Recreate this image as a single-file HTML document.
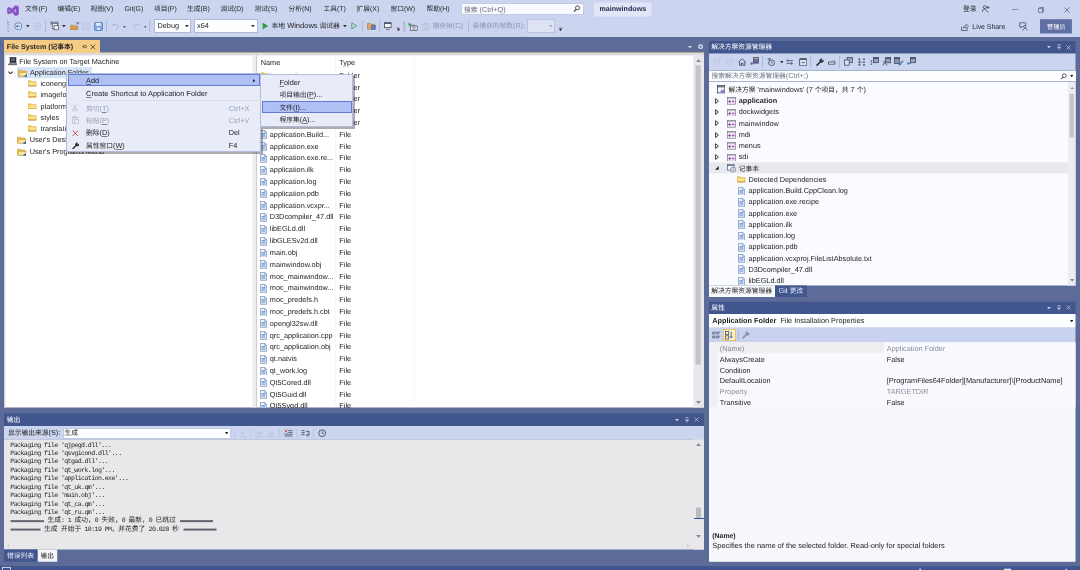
<!DOCTYPE html>
<html><head><meta charset="utf-8"><title>mainwindows - Visual Studio</title><style>
html,body{margin:0;padding:0}
body{width:1080px;height:570px;overflow:hidden;position:relative;background:#5D6B99;font-family:"Liberation Sans","Noto Sans CJK SC",sans-serif;font-size:7.3px;color:#1e1e1e;text-rendering:geometricPrecision;-webkit-font-smoothing:antialiased}
#root{position:absolute;left:0;top:0;width:1080px;height:570px;overflow:hidden;will-change:transform}
.a{position:absolute;display:block}
.t{position:absolute;white-space:nowrap;line-height:10px;height:10px}
i{font-style:normal;font-size:6.75px;display:inline-block;position:relative;width:6.75px;text-align:center;white-space:nowrap}
.m{font-family:"Liberation Mono","Noto Sans CJK SC",monospace;font-size:6.6px;letter-spacing:-0.585px;color:#1e1e1e}
.m i{letter-spacing:0}
u{text-decoration-thickness:0.4px;text-underline-offset:0.7px;text-decoration-color:rgba(40,40,50,0.55)}
</style></head><body><div id="root">
<div class="a " style="left:0px;top:0px;width:1080px;height:37px;background:#CCD5F0;"></div>
<svg class="a" style="left:6.5px;top:4.5px;" width="12" height="11.2" viewBox="0 0 12 11.2"><path d="M8.6 0.3L11.7 1.8V9.4L8.6 10.9L5.8 8.2V7L1.7 9.2L0.2 7.7V3.5L1.7 2L5.8 4.2V3z" fill="#8A53C6" stroke="#8A53C6" stroke-width="0.4" stroke-linejoin="round"/><path d="M8.8 3.7V7.5L7.2 5.6z" fill="#D9C8F0"/><path d="M1.9 4.6V6.6L3.1 5.6z" fill="#D9C8F0"/></svg>
<div class="t " style="left:25px;top:5px;font-size:6.9px;color:#262626;"><i>文</i><i>件</i>(F)</div>
<div class="t " style="left:57.5px;top:5px;font-size:6.9px;color:#262626;"><i>编</i><i>辑</i>(E)</div>
<div class="t " style="left:90.5px;top:5px;font-size:6.9px;color:#262626;"><i>视</i><i>图</i>(V)</div>
<div class="t " style="left:124.5px;top:5px;font-size:6.9px;color:#262626;">Git(G)</div>
<div class="t " style="left:154px;top:5px;font-size:6.9px;color:#262626;"><i>项</i><i>目</i>(P)</div>
<div class="t " style="left:187px;top:5px;font-size:6.9px;color:#262626;"><i>生</i><i>成</i>(B)</div>
<div class="t " style="left:220.5px;top:5px;font-size:6.9px;color:#262626;"><i>调</i><i>试</i>(D)</div>
<div class="t " style="left:254.5px;top:5px;font-size:6.9px;color:#262626;"><i>测</i><i>试</i>(S)</div>
<div class="t " style="left:288.5px;top:5px;font-size:6.9px;color:#262626;"><i>分</i><i>析</i>(N)</div>
<div class="t " style="left:323.5px;top:5px;font-size:6.9px;color:#262626;"><i>工</i><i>具</i>(T)</div>
<div class="t " style="left:356.5px;top:5px;font-size:6.9px;color:#262626;"><i>扩</i><i>展</i>(X)</div>
<div class="t " style="left:390.5px;top:5px;font-size:6.9px;color:#262626;"><i>窗</i><i>口</i>(W)</div>
<div class="t " style="left:426.5px;top:5px;font-size:6.9px;color:#262626;"><i>帮</i><i>助</i>(H)</div>
<div class="a " style="left:460.7px;top:3.1px;width:123.8px;height:12.1px;background:#F9FAFF;border:0.6px solid #C3CBE4;box-sizing:border-box;"></div>
<div class="t " style="left:464px;top:4.6px;color:#6a6f80;"><i>搜</i><i>索</i> (Ctrl+Q)</div>
<svg class="a" style="left:573.3px;top:5.4px;" width="7.4" height="7.4" viewBox="0 0 7 7"><circle cx="4.3" cy="2.7" r="1.9" fill="none" stroke="#333" stroke-width="0.8"/><path d="M3 4.1L0.8 6.3" stroke="#333" stroke-width="1"/></svg>
<svg class="a" style="left:594px;top:2px" width="58" height="15"><rect x="0.00" y="0.40" width="57.30" height="14.20" fill="#E0E6F7"/></svg>
<div class="t " style="left:599.4px;top:4.4px;font-weight:bold;color:#262d4d;font-size:7.15px;">mainwindows</div>
<div class="t " style="left:963px;top:3.7px;"><i>登</i><i>录</i></div>
<svg class="a" style="left:981.8px;top:5.2px;" width="8" height="8" viewBox="0 0 8 8"><circle cx="2.8" cy="2.2" r="1.5" fill="none" stroke="#333" stroke-width="0.7"/><path d="M0.5 7V5.8Q0.5 4.2 2.8 4.2L6.5 7.5M4.5 2.5h3M6 1v3" fill="none" stroke="#333" stroke-width="0.7"/></svg>
<svg class="a" style="left:1012px;top:9px" width="7" height="1"><rect x="0.30" y="0.10" width="5.80" height="0.60" fill="#555b70"/></svg>
<svg class="a" style="left:1038px;top:6.6px;" width="6.2" height="6.2" viewBox="0 0 7 7"><path d="M0.5 1.8h4.6v4.6H0.5z M1.8 1.8V0.6h4.6v4.6H5.1" fill="none" stroke="#555b70" stroke-width="0.8"/></svg>
<svg class="a" style="left:1064.2px;top:7px;" width="6.2" height="6.2" viewBox="0 0 6.2 6.2"><path d="M0.4 0.4l5.2 5.2M5.6 0.4L0.4 5.6" stroke="#555b70" stroke-width="0.7"/></svg>
<svg class="a" style="left:960.5px;top:23px;" width="8" height="8" viewBox="0 0 8 8"><path d="M0.6 3.5v4h5.6V5.2" fill="none" stroke="#3a3f55" stroke-width="0.7"/><path d="M2.2 5.5Q2.6 2.6 5.3 2.4V1l2.2 2.2L5.3 5.3V4Q3.4 4 2.2 5.5z" fill="none" stroke="#3a3f55" stroke-width="0.6"/></svg>
<div class="t " style="left:972.3px;top:22.8px;font-size:6.9px;">Live Share</div>
<svg class="a" style="left:1018.5px;top:21.5px;" width="9" height="9" viewBox="0 0 9 9"><path d="M0.6 0.8h6v3.6H3.6L2 6V4.4H0.6z" fill="none" stroke="#3a3f55" stroke-width="0.7"/><circle cx="6" cy="4.6" r="1.2" fill="#CCD5F0" stroke="#3a3f55" stroke-width="0.6"/><path d="M3.8 8.6Q4 6.3 6 6.3Q8 6.3 8.2 8.6" fill="none" stroke="#3a3f55" stroke-width="0.6"/></svg>
<svg class="a" style="left:1040px;top:19px" width="32" height="15"><rect x="0.00" y="0.20" width="31.90" height="14.30" fill="#5F6FA3"/></svg>
<div class="t " style="left:1046.8px;top:22.2px;color:#fff;transform:scale(0.91);transform-origin:0 50%;"><i>管</i><i>理</i><i>员</i></div>
<svg class="a" style="left:7px;top:20.5px;" width="2.6" height="11.5" viewBox="0 0 2.6 11.5"><rect x="0.1" y="0.00" width="1" height="0.8" fill="#8089ad"/><rect x="1.3" y="1.12" width="1" height="0.8" fill="#8089ad"/><rect x="0.1" y="2.24" width="1" height="0.8" fill="#8089ad"/><rect x="1.3" y="3.36" width="1" height="0.8" fill="#8089ad"/><rect x="0.1" y="4.48" width="1" height="0.8" fill="#8089ad"/><rect x="1.3" y="5.60" width="1" height="0.8" fill="#8089ad"/><rect x="0.1" y="6.72" width="1" height="0.8" fill="#8089ad"/><rect x="1.3" y="7.84" width="1" height="0.8" fill="#8089ad"/><rect x="0.1" y="8.96" width="1" height="0.8" fill="#8089ad"/><rect x="1.3" y="10.08" width="1" height="0.8" fill="#8089ad"/></svg>
<svg class="a" style="left:13.5px;top:21.8px;" width="8.4" height="8.4" viewBox="0 0 8.4 8.4"><circle cx="4.2" cy="4.2" r="3.5" fill="#EEF3FC" stroke="#3B6CB8" stroke-width="0.8"/><path d="M6.3 4.2H2.4M3.9 2.6L2.3 4.2L3.9 5.8" fill="none" stroke="#2D5CA8" stroke-width="0.9"/></svg>
<svg class="a" style="left:25.6px;top:25.3px;" width="3.8" height="2.3" viewBox="0 0 3.8 2.3"><path d="M0 0h3.8L1.9 2.2z" fill="#2b2b2b"/></svg>
<svg class="a" style="left:33px;top:21.8px;" width="8.4" height="8.4" viewBox="0 0 8.4 8.4"><circle cx="4.2" cy="4.2" r="3.5" fill="none" stroke="#B3BBD6" stroke-width="0.7"/><path d="M2.2 4.2H6M4.6 2.8L6 4.2L4.6 5.6" fill="none" stroke="#B3BBD6" stroke-width="0.7"/></svg>
<svg class="a" style="left:45px;top:20px" width="1" height="12"><rect x="0.30" y="0.50" width="0.60" height="11.50" fill="#9AA5C6"/></svg>
<svg class="a" style="left:49.5px;top:21.3px;" width="9.5" height="9.5" viewBox="0 0 9.5 9.5"><path d="M1 1.2h7M1 1.2v2.6M8 1.2v2.6" stroke="#4a4f5e" stroke-width="0.7" fill="none"/><rect x="2.3" y="2.6" width="5" height="5" fill="#F6F6FA" stroke="#4a4f5e" stroke-width="0.7"/><rect x="4" y="4.6" width="4.4" height="4.2" fill="#E9ECF5" stroke="#4a4f5e" stroke-width="0.7"/><path d="M0.6 0.6l1.2 1.2M1.8 0.6L0.6 1.8" stroke="#4a4f5e" stroke-width="0.5"/></svg>
<svg class="a" style="left:62.1px;top:25.3px;" width="3.8" height="2.3" viewBox="0 0 3.8 2.3"><path d="M0 0h3.8L1.9 2.2z" fill="#2b2b2b"/></svg>
<svg class="a" style="left:69.5px;top:21.6px;" width="9.4" height="8.6" viewBox="0 0 9.4 8.6"><path d="M0.5 3.2h2.6l0.8 0.9h3.9v3.9H0.5z" fill="#D9A050" stroke="#A87228" stroke-width="0.5"/><path d="M5.8 2.6L8.2 0.8M8.4 0.4v1.9M6.8 0.5h1.7" stroke="#3B6CB8" stroke-width="0.75" fill="none"/></svg>
<svg class="a" style="left:82.3px;top:22px;" width="7.4" height="7.8" viewBox="0 0 7.4 7.8"><path d="M0.5 0.5h5.2l1.2 1.2v5.6H0.5z" fill="none" stroke="#B9C1DA" stroke-width="0.7"/><path d="M1.8 0.5v2.2h3.2V0.5M1.6 7.2V4.6h4.2v2.6" fill="none" stroke="#B9C1DA" stroke-width="0.6"/></svg>
<svg class="a" style="left:93.7px;top:21.5px;" width="9" height="9" viewBox="0 0 9 9"><rect x="0.5" y="0.5" width="8" height="8" rx="0.8" fill="#86AEE3" stroke="#3F72B8" stroke-width="0.7"/><rect x="2.2" y="0.9" width="4.6" height="2.8" fill="#E4EEFB"/><path d="M2.3 8V5.5Q4.5 4.3 6.7 5.5V8" fill="#D5E4F8" stroke="#3F72B8" stroke-width="0.5"/></svg>
<svg class="a" style="left:106px;top:20px" width="1" height="12"><rect x="0.30" y="0.50" width="0.60" height="11.50" fill="#9AA5C6"/></svg>
<svg class="a" style="left:111.5px;top:22px;" width="7" height="8" viewBox="0 0 7 8"><path d="M1 2.6h3.2Q6.3 2.8 6.2 4.8Q6 6.6 3.6 7.3" fill="none" stroke="#A9B3D3" stroke-width="0.9"/><path d="M2.6 0.8L0.8 2.6L2.6 4.4" fill="none" stroke="#A9B3D3" stroke-width="0.9"/></svg>
<svg class="a" style="left:123px;top:25.5px;" width="2.8" height="2.3" viewBox="0 0 2.8 2.3"><path d="M0 0h2.8L1.4 2.2z" fill="#5a6078"/></svg>
<svg class="a" style="left:132.5px;top:22px;" width="7" height="8" viewBox="0 0 7 8"><path d="M6 2.6H2.8Q0.7 2.8 0.8 4.8Q1 6.6 3.4 7.3" fill="none" stroke="#B4BCD8" stroke-width="0.9"/><path d="M4.4 0.8L6.2 2.6L4.4 4.4" fill="none" stroke="#B4BCD8" stroke-width="0.9"/></svg>
<svg class="a" style="left:143.5px;top:25.5px;" width="2.8" height="2.3" viewBox="0 0 2.8 2.3"><path d="M0 0h2.8L1.4 2.2z" fill="#5a6078"/></svg>
<svg class="a" style="left:149px;top:20px" width="2" height="12"><rect x="0.50" y="0.50" width="0.60" height="11.50" fill="#9AA5C6"/></svg>
<div class="a " style="left:154.3px;top:19.4px;width:37.2px;height:13.2px;background:#FDFEFF;border:0.7px solid #AEB9D8;box-sizing:border-box;border-radius:0.6px;"></div>
<div class="t " style="left:157.5px;top:21.3px;">Debug</div>
<svg class="a" style="left:185.3px;top:25.4px;" width="3.8" height="2.3" viewBox="0 0 3.8 2.3"><path d="M0 0h3.8L1.9 2.2z" fill="#2b2b2b"/></svg>
<div class="a " style="left:194px;top:19.4px;width:63.5px;height:13.2px;background:#FDFEFF;border:0.7px solid #AEB9D8;box-sizing:border-box;border-radius:0.6px;"></div>
<div class="t " style="left:197px;top:21.3px;">x64</div>
<svg class="a" style="left:250.9px;top:25.4px;" width="3.8" height="2.3" viewBox="0 0 3.8 2.3"><path d="M0 0h3.8L1.9 2.2z" fill="#2b2b2b"/></svg>
<svg class="a" style="left:261.5px;top:22.4px;" width="7" height="8" viewBox="0 0 7 8"><path d="M0.6 0.5L6.2 4L0.6 7.5z" fill="#2E9E3E"/></svg>
<div class="t " style="left:271.6px;top:21.1px;"><i>本</i><i>地</i> <span style="font-size:7.5px;position:relative;top:0.3px">Windows</span> <i>调</i><i>试</i><i>器</i></div>
<svg class="a" style="left:343px;top:25.4px;" width="3.8" height="2.3" viewBox="0 0 3.8 2.3"><path d="M0 0h3.8L1.9 2.2z" fill="#2b2b2b"/></svg>
<svg class="a" style="left:350.8px;top:22.4px;" width="7" height="7.6" viewBox="0 0 7 7.6"><path d="M0.8 0.8L5.8 3.8L0.8 6.8z" fill="none" stroke="#3DA04B" stroke-width="0.8"/></svg>
<svg class="a" style="left:362px;top:20px" width="1" height="12"><rect x="0.30" y="0.50" width="0.60" height="11.50" fill="#9AA5C6"/></svg>
<svg class="a" style="left:367px;top:22px;" width="9" height="8.5" viewBox="0 0 9 8.5"><path d="M0.5 1.5h3l0.7 0.8h3.6v5H0.5z" fill="#D9A85E" stroke="#8B6A34" stroke-width="0.5"/><rect x="4.6" y="3.4" width="3.8" height="4" fill="#5C7FC2" stroke="#34508A" stroke-width="0.4"/></svg>
<svg class="a" style="left:379px;top:20px" width="2" height="12"><rect x="0.50" y="0.50" width="0.60" height="11.50" fill="#9AA5C6"/></svg>
<svg class="a" style="left:384px;top:22.3px;" width="8" height="8" viewBox="0 0 8 8"><rect x="0.5" y="0.6" width="6.6" height="5" fill="#F2F4FA" stroke="#444A5C" stroke-width="0.8"/><path d="M0.5 1.4h6.6" stroke="#444A5C" stroke-width="1"/><path d="M2.2 7.3h3.4" stroke="#444A5C" stroke-width="0.8"/></svg>
<svg class="a" style="left:396px;top:27px" width="4" height="2"><rect x="0.70" y="0.70" width="3.00" height="0.70" fill="#2b2b2b"/></svg>
<svg class="a" style="left:396.5px;top:29.1px;" width="3" height="2.3" viewBox="0 0 3 2.3"><path d="M0 0h3.0L1.5 2.2z" fill="#2b2b2b"/></svg>
<svg class="a" style="left:403px;top:20.5px;" width="2.6" height="11.5" viewBox="0 0 2.6 11.5"><rect x="0.1" y="0.00" width="1" height="0.8" fill="#8089ad"/><rect x="1.3" y="1.12" width="1" height="0.8" fill="#8089ad"/><rect x="0.1" y="2.24" width="1" height="0.8" fill="#8089ad"/><rect x="1.3" y="3.36" width="1" height="0.8" fill="#8089ad"/><rect x="0.1" y="4.48" width="1" height="0.8" fill="#8089ad"/><rect x="1.3" y="5.60" width="1" height="0.8" fill="#8089ad"/><rect x="0.1" y="6.72" width="1" height="0.8" fill="#8089ad"/><rect x="1.3" y="7.84" width="1" height="0.8" fill="#8089ad"/><rect x="0.1" y="8.96" width="1" height="0.8" fill="#8089ad"/><rect x="1.3" y="10.08" width="1" height="0.8" fill="#8089ad"/></svg>
<svg class="a" style="left:408px;top:21.8px;" width="10" height="9" viewBox="0 0 10 9"><path d="M0.6 0.6L3.8 2.6L0.6 4.6z" fill="#2E9E3E"/><rect x="2.6" y="4" width="6.6" height="4.4" fill="#F0F2F8" stroke="#444A5C" stroke-width="0.7"/><circle cx="5.9" cy="6.2" r="1.3" fill="none" stroke="#444A5C" stroke-width="0.6"/><path d="M4.4 4V3.2h2.4V4" stroke="#444A5C" stroke-width="0.6" fill="none"/></svg>
<svg class="a" style="left:422px;top:22.5px;" width="8" height="8" viewBox="0 0 8 8"><rect x="0.6" y="1.6" width="5" height="5.4" fill="none" stroke="#B4BCD8" stroke-width="0.7"/><rect x="2.2" y="0.6" width="5" height="5" fill="none" stroke="#B4BCD8" stroke-width="0.6"/></svg>
<div class="t " style="left:432.5px;top:21.2px;color:#8e96b3;"><i>捕</i><i>获</i><i>帧</i>(C)</div>
<svg class="a" style="left:468px;top:20px" width="1" height="12"><rect x="0.00" y="0.50" width="0.60" height="11.50" fill="#9AA5C6"/></svg>
<div class="t " style="left:472.5px;top:21.2px;color:#8e96b3;"><i>要</i><i>捕</i><i>获</i><i>的</i><i>帧</i><i>数</i>(R):</div>
<div class="a " style="left:527.3px;top:19.4px;width:27.5px;height:13.2px;background:#DDE3F4;border:0.7px solid #BCC5DF;box-sizing:border-box;"></div>
<svg class="a" style="left:548.6px;top:25.4px;" width="3.4" height="2.3" viewBox="0 0 3.4 2.3"><path d="M0 0h3.4000000000000004L1.7000000000000002 2.2z" fill="#9aa3c0"/></svg>
<svg class="a" style="left:559px;top:27px" width="4" height="2"><rect x="0.30" y="0.70" width="3.00" height="0.70" fill="#2b2b2b"/></svg>
<svg class="a" style="left:559.1px;top:29.1px;" width="3" height="2.3" viewBox="0 0 3 2.3"><path d="M0 0h3.0L1.5 2.2z" fill="#2b2b2b"/></svg>
<div class="a " style="left:4px;top:40px;width:96px;height:13px;background:#F5CC84;"></div>
<div class="t bd" style="left:6.8px;top:41.7px;font-weight:bold;color:#1e1e1e;font-size:7.1px;">File System (<i>记</i><i>事</i><i>本</i>)</div>
<svg class="a" style="left:81.5px;top:44.3px;" width="5" height="5" viewBox="0 0 5 5"><path d="M0.2 2.5h1.6M1.8 0.9v3.2M1.8 1.4h2.6v2.2H1.8" fill="none" stroke="#4a4030" stroke-width="0.6"/></svg>
<svg class="a" style="left:89.8px;top:43.8px;" width="6" height="6" viewBox="0 0 6 6"><path d="M0.6 0.6l4.6 4.6M5.2 0.6L0.6 5.2" stroke="#3a3326" stroke-width="0.8"/></svg>
<div class="a " style="left:100px;top:52px;width:604px;height:1px;background:#B7A98F;"></div>
<div class="a " style="left:4px;top:53px;width:700px;height:2px;background:#DADADF;"></div>
<svg class="a" style="left:688.3px;top:45.8px;" width="4" height="2.4" viewBox="0 0 4 2.4"><path d="M0 0h4L2 2.2z" fill="#D9DFF1"/></svg>
<svg class="a" style="left:698px;top:44px;" width="5.4" height="5.4" viewBox="0 0 6 6"><circle cx="3" cy="3" r="1.9" fill="none" stroke="#D9DFF1" stroke-width="1.4"/><circle cx="3" cy="3" r="2.7" fill="none" stroke="#D9DFF1" stroke-width="0.8" stroke-dasharray="1 1.1"/></svg>
<svg class="a" style="left:4px;top:55px" width="700" height="353"><rect x="0.00" y="0.00" width="700.00" height="352.50" fill="#fff"/></svg>
<div class="a " style="left:4px;top:55px;width:700px;height:1px;background:#F0F0F3;"></div>
<svg class="a" style="left:4px;top:53px" width="2" height="355"><rect x="0.00" y="0.00" width="1.40" height="354.50" fill="#D5D6DC"/></svg>
<svg class="a" style="left:252px;top:54px" width="5" height="354"><rect x="0.60" y="0.80" width="4.10" height="352.70" fill="#EDEDEF"/></svg>
<svg class="a" style="left:256px;top:54px" width="2" height="354"><rect x="0.50" y="0.80" width="0.60" height="352.70" fill="#A9ABB3"/></svg>
<svg class="a" style="left:693px;top:54px" width="11" height="354"><rect x="0.30" y="0.80" width="10.70" height="352.70" fill="#E8E8EC"/></svg>
<svg class="a" style="left:696px;top:58.5px;" width="5" height="3" viewBox="0 0 5 3"><path d="M0 3h5L2.5 0z" fill="#868999"/></svg>
<svg class="a" style="left:696px;top:401px;" width="5" height="3" viewBox="0 0 5 3"><path d="M0 0h5L2.5 3z" fill="#868999"/></svg>
<svg class="a" style="left:695px;top:65px" width="6" height="300"><rect x="0.60" y="0.50" width="5.20" height="299.20" fill="#C2C3C9"/></svg>
<svg class="a" style="left:7.5px;top:57.3px;" width="9" height="8.4" viewBox="0 0 9 8.4"><rect x="2" y="0.4" width="6" height="4.8" fill="#2b2e36" stroke="#1c1e24" stroke-width="0.5"/><rect x="2.9" y="1.2" width="4.2" height="3" fill="#59647c"/><path d="M0.4 7.7l1.6-2.2h6l0.8 2.2z" fill="#8b8f99" stroke="#2b2e36" stroke-width="0.6"/></svg>
<div class="t " style="left:19.3px;top:56.5px;">File System on Target Machine</div>
<svg class="a" style="left:17px;top:67px" width="75" height="12"><rect x="0.00" y="0.15" width="75.00" height="11.20" fill="#D5E3F7"/></svg>
<svg class="a" style="left:8.3px;top:70.75px;" width="5.2" height="3.6" viewBox="0 0 5.2 3.6"><path d="M0.5 0.6l2.1 2.2l2.1-2.2" fill="none" stroke="#2e2e2e" stroke-width="1.05"/></svg>
<svg class="a" style="left:17.8px;top:68.75px;" width="9.6" height="8.2" viewBox="0 0 9.6 8.2"><path d="M0.4 1.2h2.9l0.8 0.9h4v5H0.4z" fill="#EFC450" stroke="#B8902C" stroke-width="0.55"/><path d="M1.7 3.4h7.5l-1.5 3.8H0.4z" fill="#FBE59A" stroke="#B8902C" stroke-width="0.5"/><path d="M5.6 7.6l3.4-2.6v3.2z" fill="#3D6DB5"/></svg>
<div class="t " style="left:30px;top:67.75px;">Application Folder</div>
<svg class="a" style="left:28.4px;top:80.2px;" width="8.6" height="6.6" viewBox="0 0 8.8 7"><path d="M0.3 0.9h2.9l0.8 0.9h4.4v4.7H0.3z" fill="#F5CE55" stroke="#C99A2C" stroke-width="0.55"/><path d="M0.7 2.5h7.3v3.1H0.7z" fill="#FBE38C"/><path d="M0.3 6.4h8.1" stroke="#A97F22" stroke-width="0.6"/></svg>
<div class="t " style="left:40.5px;top:79px;">iconengines</div>
<svg class="a" style="left:28.4px;top:91.45px;" width="8.6" height="6.6" viewBox="0 0 8.8 7"><path d="M0.3 0.9h2.9l0.8 0.9h4.4v4.7H0.3z" fill="#F5CE55" stroke="#C99A2C" stroke-width="0.55"/><path d="M0.7 2.5h7.3v3.1H0.7z" fill="#FBE38C"/><path d="M0.3 6.4h8.1" stroke="#A97F22" stroke-width="0.6"/></svg>
<div class="t " style="left:40.5px;top:90.25px;">imageformats</div>
<svg class="a" style="left:28.4px;top:102.7px;" width="8.6" height="6.6" viewBox="0 0 8.8 7"><path d="M0.3 0.9h2.9l0.8 0.9h4.4v4.7H0.3z" fill="#F5CE55" stroke="#C99A2C" stroke-width="0.55"/><path d="M0.7 2.5h7.3v3.1H0.7z" fill="#FBE38C"/><path d="M0.3 6.4h8.1" stroke="#A97F22" stroke-width="0.6"/></svg>
<div class="t " style="left:40.5px;top:101.5px;">platforms</div>
<svg class="a" style="left:28.4px;top:113.95px;" width="8.6" height="6.6" viewBox="0 0 8.8 7"><path d="M0.3 0.9h2.9l0.8 0.9h4.4v4.7H0.3z" fill="#F5CE55" stroke="#C99A2C" stroke-width="0.55"/><path d="M0.7 2.5h7.3v3.1H0.7z" fill="#FBE38C"/><path d="M0.3 6.4h8.1" stroke="#A97F22" stroke-width="0.6"/></svg>
<div class="t " style="left:40.5px;top:112.75px;">styles</div>
<svg class="a" style="left:28.4px;top:125.2px;" width="8.6" height="6.6" viewBox="0 0 8.8 7"><path d="M0.3 0.9h2.9l0.8 0.9h4.4v4.7H0.3z" fill="#F5CE55" stroke="#C99A2C" stroke-width="0.55"/><path d="M0.7 2.5h7.3v3.1H0.7z" fill="#FBE38C"/><path d="M0.3 6.4h8.1" stroke="#A97F22" stroke-width="0.6"/></svg>
<div class="t " style="left:40.5px;top:124px;">translations</div>
<svg class="a" style="left:17.2px;top:136.25px;" width="9.6" height="8.2" viewBox="0 0 9.6 8.2"><path d="M0.4 1.2h2.9l0.8 0.9h4v5H0.4z" fill="#EFC450" stroke="#B8902C" stroke-width="0.55"/><path d="M1.7 3.4h7.5l-1.5 3.8H0.4z" fill="#FBE59A" stroke="#B8902C" stroke-width="0.5"/><path d="M5.6 7.6l3.4-2.6v3.2z" fill="#3D6DB5"/></svg>
<div class="t " style="left:29.7px;top:135.25px;">User's Desktop</div>
<svg class="a" style="left:17.2px;top:147.5px;" width="9.6" height="8.2" viewBox="0 0 9.6 8.2"><path d="M0.4 1.2h2.9l0.8 0.9h4v5H0.4z" fill="#EFC450" stroke="#B8902C" stroke-width="0.55"/><path d="M1.7 3.4h7.5l-1.5 3.8H0.4z" fill="#FBE59A" stroke="#B8902C" stroke-width="0.5"/><path d="M5.6 7.6l3.4-2.6v3.2z" fill="#3D6DB5"/></svg>
<div class="t " style="left:29.7px;top:146.5px;">User's Programs Menu</div>
<div class="t " style="left:260.8px;top:57.8px;">Name</div>
<div class="t " style="left:339.3px;top:57.8px;">Type</div>
<svg class="a" style="left:335px;top:56px" width="1" height="352"><rect x="0.30" y="0.00" width="0.70" height="351.50" fill="#F4F4F6"/></svg>
<svg class="a" style="left:413px;top:56px" width="2" height="352"><rect x="0.90" y="0.00" width="0.70" height="351.50" fill="#F4F4F6"/></svg>
<svg class="a" style="left:260.8px;top:72px;" width="8.6" height="6.6" viewBox="0 0 8.8 7"><path d="M0.3 0.9h2.9l0.8 0.9h4.4v4.7H0.3z" fill="#F5CE55" stroke="#C99A2C" stroke-width="0.55"/><path d="M0.7 2.5h7.3v3.1H0.7z" fill="#FBE38C"/><path d="M0.3 6.4h8.1" stroke="#A97F22" stroke-width="0.6"/></svg>
<div class="t " style="left:269.8px;top:70.8px;">iconengines</div>
<div class="t " style="left:339.3px;top:70.8px;">Folder</div>
<svg class="a" style="left:260.8px;top:83.8125px;" width="8.6" height="6.6" viewBox="0 0 8.8 7"><path d="M0.3 0.9h2.9l0.8 0.9h4.4v4.7H0.3z" fill="#F5CE55" stroke="#C99A2C" stroke-width="0.55"/><path d="M0.7 2.5h7.3v3.1H0.7z" fill="#FBE38C"/><path d="M0.3 6.4h8.1" stroke="#A97F22" stroke-width="0.6"/></svg>
<div class="t " style="left:269.8px;top:82.6125px;">imageformats</div>
<div class="t " style="left:339.3px;top:82.6125px;">Folder</div>
<svg class="a" style="left:260.8px;top:95.625px;" width="8.6" height="6.6" viewBox="0 0 8.8 7"><path d="M0.3 0.9h2.9l0.8 0.9h4.4v4.7H0.3z" fill="#F5CE55" stroke="#C99A2C" stroke-width="0.55"/><path d="M0.7 2.5h7.3v3.1H0.7z" fill="#FBE38C"/><path d="M0.3 6.4h8.1" stroke="#A97F22" stroke-width="0.6"/></svg>
<div class="t " style="left:269.8px;top:94.425px;">platforms</div>
<div class="t " style="left:339.3px;top:94.425px;">Folder</div>
<svg class="a" style="left:260.8px;top:107.438px;" width="8.6" height="6.6" viewBox="0 0 8.8 7"><path d="M0.3 0.9h2.9l0.8 0.9h4.4v4.7H0.3z" fill="#F5CE55" stroke="#C99A2C" stroke-width="0.55"/><path d="M0.7 2.5h7.3v3.1H0.7z" fill="#FBE38C"/><path d="M0.3 6.4h8.1" stroke="#A97F22" stroke-width="0.6"/></svg>
<div class="t " style="left:269.8px;top:106.237px;">styles</div>
<div class="t " style="left:339.3px;top:106.237px;">Folder</div>
<svg class="a" style="left:260.8px;top:119.25px;" width="8.6" height="6.6" viewBox="0 0 8.8 7"><path d="M0.3 0.9h2.9l0.8 0.9h4.4v4.7H0.3z" fill="#F5CE55" stroke="#C99A2C" stroke-width="0.55"/><path d="M0.7 2.5h7.3v3.1H0.7z" fill="#FBE38C"/><path d="M0.3 6.4h8.1" stroke="#A97F22" stroke-width="0.6"/></svg>
<div class="t " style="left:269.8px;top:118.05px;">translations</div>
<div class="t " style="left:339.3px;top:118.05px;">Folder</div>
<div class="a" style="left:257px;top:55px;width:436px;height:352.5px;overflow:hidden">
<svg class="a" style="left:3.3px;top:75.4px" width="7.2" height="8.8" viewBox="0 0 7.2 8.8"><path d="M0.4 0.4h4.3l2 2v5.9H0.4z" fill="#EAF1FC" stroke="#5878A8" stroke-width="0.65"/><path d="M4.7 0.4v2h2" fill="#C9DAF2" stroke="#5878A8" stroke-width="0.5"/><path d="M1.5 3.6h3.9M1.5 4.9h3.9M1.5 6.2h3.9" stroke="#4F80C8" stroke-width="0.75"/></svg>
<div class="t" style="left:12.8px;top:74.8px">application.Build...</div>
<div class="t" style="left:82.3px;top:74.8px">File</div>
<svg class="a" style="left:3.3px;top:87.2125px" width="7.2" height="8.8" viewBox="0 0 7.2 8.8"><path d="M0.4 0.4h4.3l2 2v5.9H0.4z" fill="#EAF1FC" stroke="#5878A8" stroke-width="0.65"/><path d="M4.7 0.4v2h2" fill="#C9DAF2" stroke="#5878A8" stroke-width="0.5"/><path d="M1.5 3.6h3.9M1.5 4.9h3.9M1.5 6.2h3.9" stroke="#4F80C8" stroke-width="0.75"/></svg>
<div class="t" style="left:12.8px;top:86.6125px">application.exe</div>
<div class="t" style="left:82.3px;top:86.6125px">File</div>
<svg class="a" style="left:3.3px;top:99.025px" width="7.2" height="8.8" viewBox="0 0 7.2 8.8"><path d="M0.4 0.4h4.3l2 2v5.9H0.4z" fill="#EAF1FC" stroke="#5878A8" stroke-width="0.65"/><path d="M4.7 0.4v2h2" fill="#C9DAF2" stroke="#5878A8" stroke-width="0.5"/><path d="M1.5 3.6h3.9M1.5 4.9h3.9M1.5 6.2h3.9" stroke="#4F80C8" stroke-width="0.75"/></svg>
<div class="t" style="left:12.8px;top:98.425px">application.exe.re...</div>
<div class="t" style="left:82.3px;top:98.425px">File</div>
<svg class="a" style="left:3.3px;top:110.838px" width="7.2" height="8.8" viewBox="0 0 7.2 8.8"><path d="M0.4 0.4h4.3l2 2v5.9H0.4z" fill="#EAF1FC" stroke="#5878A8" stroke-width="0.65"/><path d="M4.7 0.4v2h2" fill="#C9DAF2" stroke="#5878A8" stroke-width="0.5"/><path d="M1.5 3.6h3.9M1.5 4.9h3.9M1.5 6.2h3.9" stroke="#4F80C8" stroke-width="0.75"/></svg>
<div class="t" style="left:12.8px;top:110.238px">application.ilk</div>
<div class="t" style="left:82.3px;top:110.238px">File</div>
<svg class="a" style="left:3.3px;top:122.65px" width="7.2" height="8.8" viewBox="0 0 7.2 8.8"><path d="M0.4 0.4h4.3l2 2v5.9H0.4z" fill="#EAF1FC" stroke="#5878A8" stroke-width="0.65"/><path d="M4.7 0.4v2h2" fill="#C9DAF2" stroke="#5878A8" stroke-width="0.5"/><path d="M1.5 3.6h3.9M1.5 4.9h3.9M1.5 6.2h3.9" stroke="#4F80C8" stroke-width="0.75"/></svg>
<div class="t" style="left:12.8px;top:122.05px">application.log</div>
<div class="t" style="left:82.3px;top:122.05px">File</div>
<svg class="a" style="left:3.3px;top:134.463px" width="7.2" height="8.8" viewBox="0 0 7.2 8.8"><path d="M0.4 0.4h4.3l2 2v5.9H0.4z" fill="#EAF1FC" stroke="#5878A8" stroke-width="0.65"/><path d="M4.7 0.4v2h2" fill="#C9DAF2" stroke="#5878A8" stroke-width="0.5"/><path d="M1.5 3.6h3.9M1.5 4.9h3.9M1.5 6.2h3.9" stroke="#4F80C8" stroke-width="0.75"/></svg>
<div class="t" style="left:12.8px;top:133.863px">application.pdb</div>
<div class="t" style="left:82.3px;top:133.863px">File</div>
<svg class="a" style="left:3.3px;top:146.275px" width="7.2" height="8.8" viewBox="0 0 7.2 8.8"><path d="M0.4 0.4h4.3l2 2v5.9H0.4z" fill="#EAF1FC" stroke="#5878A8" stroke-width="0.65"/><path d="M4.7 0.4v2h2" fill="#C9DAF2" stroke="#5878A8" stroke-width="0.5"/><path d="M1.5 3.6h3.9M1.5 4.9h3.9M1.5 6.2h3.9" stroke="#4F80C8" stroke-width="0.75"/></svg>
<div class="t" style="left:12.8px;top:145.675px">application.vcxpr...</div>
<div class="t" style="left:82.3px;top:145.675px">File</div>
<svg class="a" style="left:3.3px;top:158.088px" width="7.2" height="8.8" viewBox="0 0 7.2 8.8"><path d="M0.4 0.4h4.3l2 2v5.9H0.4z" fill="#EAF1FC" stroke="#5878A8" stroke-width="0.65"/><path d="M4.7 0.4v2h2" fill="#C9DAF2" stroke="#5878A8" stroke-width="0.5"/><path d="M1.5 3.6h3.9M1.5 4.9h3.9M1.5 6.2h3.9" stroke="#4F80C8" stroke-width="0.75"/></svg>
<div class="t" style="left:12.8px;top:157.488px">D3Dcompiler_47.dll</div>
<div class="t" style="left:82.3px;top:157.488px">File</div>
<svg class="a" style="left:3.3px;top:169.9px" width="7.2" height="8.8" viewBox="0 0 7.2 8.8"><path d="M0.4 0.4h4.3l2 2v5.9H0.4z" fill="#EAF1FC" stroke="#5878A8" stroke-width="0.65"/><path d="M4.7 0.4v2h2" fill="#C9DAF2" stroke="#5878A8" stroke-width="0.5"/><path d="M1.5 3.6h3.9M1.5 4.9h3.9M1.5 6.2h3.9" stroke="#4F80C8" stroke-width="0.75"/></svg>
<div class="t" style="left:12.8px;top:169.3px">libEGLd.dll</div>
<div class="t" style="left:82.3px;top:169.3px">File</div>
<svg class="a" style="left:3.3px;top:181.713px" width="7.2" height="8.8" viewBox="0 0 7.2 8.8"><path d="M0.4 0.4h4.3l2 2v5.9H0.4z" fill="#EAF1FC" stroke="#5878A8" stroke-width="0.65"/><path d="M4.7 0.4v2h2" fill="#C9DAF2" stroke="#5878A8" stroke-width="0.5"/><path d="M1.5 3.6h3.9M1.5 4.9h3.9M1.5 6.2h3.9" stroke="#4F80C8" stroke-width="0.75"/></svg>
<div class="t" style="left:12.8px;top:181.113px">libGLESv2d.dll</div>
<div class="t" style="left:82.3px;top:181.113px">File</div>
<svg class="a" style="left:3.3px;top:193.525px" width="7.2" height="8.8" viewBox="0 0 7.2 8.8"><path d="M0.4 0.4h4.3l2 2v5.9H0.4z" fill="#EAF1FC" stroke="#5878A8" stroke-width="0.65"/><path d="M4.7 0.4v2h2" fill="#C9DAF2" stroke="#5878A8" stroke-width="0.5"/><path d="M1.5 3.6h3.9M1.5 4.9h3.9M1.5 6.2h3.9" stroke="#4F80C8" stroke-width="0.75"/></svg>
<div class="t" style="left:12.8px;top:192.925px">main.obj</div>
<div class="t" style="left:82.3px;top:192.925px">File</div>
<svg class="a" style="left:3.3px;top:205.338px" width="7.2" height="8.8" viewBox="0 0 7.2 8.8"><path d="M0.4 0.4h4.3l2 2v5.9H0.4z" fill="#EAF1FC" stroke="#5878A8" stroke-width="0.65"/><path d="M4.7 0.4v2h2" fill="#C9DAF2" stroke="#5878A8" stroke-width="0.5"/><path d="M1.5 3.6h3.9M1.5 4.9h3.9M1.5 6.2h3.9" stroke="#4F80C8" stroke-width="0.75"/></svg>
<div class="t" style="left:12.8px;top:204.738px">mainwindow.obj</div>
<div class="t" style="left:82.3px;top:204.738px">File</div>
<svg class="a" style="left:3.3px;top:217.15px" width="7.2" height="8.8" viewBox="0 0 7.2 8.8"><path d="M0.4 0.4h4.3l2 2v5.9H0.4z" fill="#EAF1FC" stroke="#5878A8" stroke-width="0.65"/><path d="M4.7 0.4v2h2" fill="#C9DAF2" stroke="#5878A8" stroke-width="0.5"/><path d="M1.5 3.6h3.9M1.5 4.9h3.9M1.5 6.2h3.9" stroke="#4F80C8" stroke-width="0.75"/></svg>
<div class="t" style="left:12.8px;top:216.55px">moc_mainwindow...</div>
<div class="t" style="left:82.3px;top:216.55px">File</div>
<svg class="a" style="left:3.3px;top:228.963px" width="7.2" height="8.8" viewBox="0 0 7.2 8.8"><path d="M0.4 0.4h4.3l2 2v5.9H0.4z" fill="#EAF1FC" stroke="#5878A8" stroke-width="0.65"/><path d="M4.7 0.4v2h2" fill="#C9DAF2" stroke="#5878A8" stroke-width="0.5"/><path d="M1.5 3.6h3.9M1.5 4.9h3.9M1.5 6.2h3.9" stroke="#4F80C8" stroke-width="0.75"/></svg>
<div class="t" style="left:12.8px;top:228.363px">moc_mainwindow...</div>
<div class="t" style="left:82.3px;top:228.363px">File</div>
<svg class="a" style="left:3.3px;top:240.775px" width="7.2" height="8.8" viewBox="0 0 7.2 8.8"><path d="M0.4 0.4h4.3l2 2v5.9H0.4z" fill="#EAF1FC" stroke="#5878A8" stroke-width="0.65"/><path d="M4.7 0.4v2h2" fill="#C9DAF2" stroke="#5878A8" stroke-width="0.5"/><path d="M1.5 3.6h3.9M1.5 4.9h3.9M1.5 6.2h3.9" stroke="#4F80C8" stroke-width="0.75"/></svg>
<div class="t" style="left:12.8px;top:240.175px">moc_predefs.h</div>
<div class="t" style="left:82.3px;top:240.175px">File</div>
<svg class="a" style="left:3.3px;top:252.588px" width="7.2" height="8.8" viewBox="0 0 7.2 8.8"><path d="M0.4 0.4h4.3l2 2v5.9H0.4z" fill="#EAF1FC" stroke="#5878A8" stroke-width="0.65"/><path d="M4.7 0.4v2h2" fill="#C9DAF2" stroke="#5878A8" stroke-width="0.5"/><path d="M1.5 3.6h3.9M1.5 4.9h3.9M1.5 6.2h3.9" stroke="#4F80C8" stroke-width="0.75"/></svg>
<div class="t" style="left:12.8px;top:251.988px">moc_predefs.h.cbt</div>
<div class="t" style="left:82.3px;top:251.988px">File</div>
<svg class="a" style="left:3.3px;top:264.4px" width="7.2" height="8.8" viewBox="0 0 7.2 8.8"><path d="M0.4 0.4h4.3l2 2v5.9H0.4z" fill="#EAF1FC" stroke="#5878A8" stroke-width="0.65"/><path d="M4.7 0.4v2h2" fill="#C9DAF2" stroke="#5878A8" stroke-width="0.5"/><path d="M1.5 3.6h3.9M1.5 4.9h3.9M1.5 6.2h3.9" stroke="#4F80C8" stroke-width="0.75"/></svg>
<div class="t" style="left:12.8px;top:263.8px">opengl32sw.dll</div>
<div class="t" style="left:82.3px;top:263.8px">File</div>
<svg class="a" style="left:3.3px;top:276.213px" width="7.2" height="8.8" viewBox="0 0 7.2 8.8"><path d="M0.4 0.4h4.3l2 2v5.9H0.4z" fill="#EAF1FC" stroke="#5878A8" stroke-width="0.65"/><path d="M4.7 0.4v2h2" fill="#C9DAF2" stroke="#5878A8" stroke-width="0.5"/><path d="M1.5 3.6h3.9M1.5 4.9h3.9M1.5 6.2h3.9" stroke="#4F80C8" stroke-width="0.75"/></svg>
<div class="t" style="left:12.8px;top:275.613px">qrc_application.cpp</div>
<div class="t" style="left:82.3px;top:275.613px">File</div>
<svg class="a" style="left:3.3px;top:288.025px" width="7.2" height="8.8" viewBox="0 0 7.2 8.8"><path d="M0.4 0.4h4.3l2 2v5.9H0.4z" fill="#EAF1FC" stroke="#5878A8" stroke-width="0.65"/><path d="M4.7 0.4v2h2" fill="#C9DAF2" stroke="#5878A8" stroke-width="0.5"/><path d="M1.5 3.6h3.9M1.5 4.9h3.9M1.5 6.2h3.9" stroke="#4F80C8" stroke-width="0.75"/></svg>
<div class="t" style="left:12.8px;top:287.425px">qrc_application.obj</div>
<div class="t" style="left:82.3px;top:287.425px">File</div>
<svg class="a" style="left:3.3px;top:299.838px" width="7.2" height="8.8" viewBox="0 0 7.2 8.8"><path d="M0.4 0.4h4.3l2 2v5.9H0.4z" fill="#EAF1FC" stroke="#5878A8" stroke-width="0.65"/><path d="M4.7 0.4v2h2" fill="#C9DAF2" stroke="#5878A8" stroke-width="0.5"/><path d="M1.5 3.6h3.9M1.5 4.9h3.9M1.5 6.2h3.9" stroke="#4F80C8" stroke-width="0.75"/></svg>
<div class="t" style="left:12.8px;top:299.238px">qt.natvis</div>
<div class="t" style="left:82.3px;top:299.238px">File</div>
<svg class="a" style="left:3.3px;top:311.65px" width="7.2" height="8.8" viewBox="0 0 7.2 8.8"><path d="M0.4 0.4h4.3l2 2v5.9H0.4z" fill="#EAF1FC" stroke="#5878A8" stroke-width="0.65"/><path d="M4.7 0.4v2h2" fill="#C9DAF2" stroke="#5878A8" stroke-width="0.5"/><path d="M1.5 3.6h3.9M1.5 4.9h3.9M1.5 6.2h3.9" stroke="#4F80C8" stroke-width="0.75"/></svg>
<div class="t" style="left:12.8px;top:311.05px">qt_work.log</div>
<div class="t" style="left:82.3px;top:311.05px">File</div>
<svg class="a" style="left:3.3px;top:323.463px" width="7.2" height="8.8" viewBox="0 0 7.2 8.8"><path d="M0.4 0.4h4.3l2 2v5.9H0.4z" fill="#EAF1FC" stroke="#5878A8" stroke-width="0.65"/><path d="M4.7 0.4v2h2" fill="#C9DAF2" stroke="#5878A8" stroke-width="0.5"/><path d="M1.5 3.6h3.9M1.5 4.9h3.9M1.5 6.2h3.9" stroke="#4F80C8" stroke-width="0.75"/></svg>
<div class="t" style="left:12.8px;top:322.863px">Qt5Cored.dll</div>
<div class="t" style="left:82.3px;top:322.863px">File</div>
<svg class="a" style="left:3.3px;top:335.275px" width="7.2" height="8.8" viewBox="0 0 7.2 8.8"><path d="M0.4 0.4h4.3l2 2v5.9H0.4z" fill="#EAF1FC" stroke="#5878A8" stroke-width="0.65"/><path d="M4.7 0.4v2h2" fill="#C9DAF2" stroke="#5878A8" stroke-width="0.5"/><path d="M1.5 3.6h3.9M1.5 4.9h3.9M1.5 6.2h3.9" stroke="#4F80C8" stroke-width="0.75"/></svg>
<div class="t" style="left:12.8px;top:334.675px">Qt5Guid.dll</div>
<div class="t" style="left:82.3px;top:334.675px">File</div>
<svg class="a" style="left:3.3px;top:347.088px" width="7.2" height="8.8" viewBox="0 0 7.2 8.8"><path d="M0.4 0.4h4.3l2 2v5.9H0.4z" fill="#EAF1FC" stroke="#5878A8" stroke-width="0.65"/><path d="M4.7 0.4v2h2" fill="#C9DAF2" stroke="#5878A8" stroke-width="0.5"/><path d="M1.5 3.6h3.9M1.5 4.9h3.9M1.5 6.2h3.9" stroke="#4F80C8" stroke-width="0.75"/></svg>
<div class="t" style="left:12.8px;top:346.488px">Qt5Svgd.dll</div>
<div class="t" style="left:82.3px;top:346.488px">File</div>
</div>
<div class="a " style="left:68.3px;top:75.3px;width:194.7px;height:79.2px;background:rgba(45,48,62,0.4);filter:blur(0.7px);"></div>
<div class="a " style="left:66px;top:73px;width:195px;height:79.4px;background:#E8ECF9;border:0.6px solid #B3BCDA;box-sizing:border-box;"></div>
<div class="a " style="left:68px;top:74.3px;width:191.6px;height:12.2px;background:#AFC1F4;border:0.6px solid #647DD0;box-sizing:border-box;"></div>
<div class="t " style="left:86.1px;top:76.2px;"><u>A</u>dd</div>
<svg class="a" style="left:252.8px;top:78.6px;" width="2.4" height="3.6" viewBox="0 0 2.4 3.6"><path d="M0 0L2.2 1.8L0 3.6z" fill="#1e1e1e"/></svg>
<div class="t " style="left:86.1px;top:89px;font-size:7.43px;"><u>C</u>reate Shortcut to Application Folder</div>
<svg class="a" style="left:84px;top:100px" width="174" height="1"><rect x="0.00" y="0.40" width="174.00" height="0.50" fill="#C3CBE2"/></svg>
<div class="t " style="left:86px;top:103.7px;color:#9ba2ba;"><i>剪</i><i>切</i>(<u>T</u>)</div>
<div class="t " style="left:228.8px;top:103.7px;color:#9ba2ba;">Ctrl+X</div>
<div class="t " style="left:86px;top:116px;color:#9ba2ba;"><i>粘</i><i>贴</i>(<u>P</u>)</div>
<div class="t " style="left:228.8px;top:116px;color:#9ba2ba;">Ctrl+V</div>
<div class="t " style="left:86px;top:128.3px;color:#1e1e1e;"><i>删</i><i>除</i>(<u>D</u>)</div>
<div class="t " style="left:228.8px;top:128.3px;color:#1e1e1e;">Del</div>
<div class="t " style="left:86px;top:140.5px;color:#1e1e1e;"><i>属</i><i>性</i><i>窗</i><i>口</i>(<u>W</u>)</div>
<div class="t " style="left:228.8px;top:140.5px;color:#1e1e1e;">F4</div>
<svg class="a" style="left:72.3px;top:104.3px;" width="6" height="7.4" viewBox="0 0 6 7.4"><path d="M1.2 0.4L4 4.8M4.8 0.4L2 4.8" stroke="#B0B6CC" stroke-width="0.6"/><circle cx="1.5" cy="5.9" r="1" fill="none" stroke="#B0B6CC" stroke-width="0.6"/><circle cx="4.5" cy="5.9" r="1" fill="none" stroke="#B0B6CC" stroke-width="0.6"/></svg>
<svg class="a" style="left:72px;top:116.4px;" width="7" height="8" viewBox="0 0 7 8"><rect x="0.5" y="1.2" width="4.6" height="6" fill="none" stroke="#B0B6CC" stroke-width="0.6"/><rect x="2.6" y="3.2" width="3.8" height="4.3" fill="#E9ECF8" stroke="#B0B6CC" stroke-width="0.6"/><rect x="1.8" y="0.4" width="2" height="1.4" fill="none" stroke="#B0B6CC" stroke-width="0.5"/></svg>
<svg class="a" style="left:72px;top:129.6px;" width="6.6" height="6.6" viewBox="0 0 6.6 6.6"><path d="M0.6 0.6l5.4 5.4M6 0.6L0.6 6" stroke="#D9363E" stroke-width="0.9"/></svg>
<svg class="a" style="left:71.8px;top:141.6px;" width="7.6" height="7.6" viewBox="0 0 8 8"><path d="M1 7L4.6 3.4" stroke="#2b2b2b" stroke-width="1.5" stroke-linecap="round"/><circle cx="5.5" cy="2.5" r="2.1" fill="#2b2b2b"/><path d="M5.3 2.7L6.6 -0.2L8.3 1.5z" fill="#E8ECF9"/></svg>
<div class="a " style="left:262.6px;top:76px;width:92.4px;height:53.2px;background:rgba(45,48,62,0.4);filter:blur(0.7px);"></div>
<div class="a " style="left:260.4px;top:73.8px;width:92.6px;height:53.4px;background:#E8ECF9;border:0.6px solid #B3BCDA;box-sizing:border-box;"></div>
<div class="t " style="left:279.5px;top:77.9px;"><u>F</u>older</div>
<div class="t " style="left:279.5px;top:90.4px;"><i>项</i><i>目</i><i>输</i><i>出</i>(<u>P</u>)...</div>
<div class="a " style="left:261.5px;top:100.6px;width:90.4px;height:12.4px;background:#AFC1F4;border:0.6px solid #647DD0;box-sizing:border-box;"></div>
<div class="t " style="left:279.5px;top:102.7px;"><i>文</i><i>件</i>(<u>I</u>)...</div>
<div class="t " style="left:279.5px;top:115.1px;"><i>程</i><i>序</i><i>集</i>(<u>A</u>)...</div>
<svg class="a" style="left:4px;top:413px" width="700" height="13"><rect x="0.00" y="0.30" width="700.00" height="12.70" fill="#40568D"/></svg>
<div class="t " style="left:6.8px;top:414.7px;color:#fff;"><i>输</i><i>出</i></div>
<svg class="a" style="left:675.3px;top:418.8px;" width="4" height="2.4" viewBox="0 0 4 2.4"><path d="M0 0h4L2 2.2z" fill="#C9D1EA"/></svg>
<svg class="a" style="left:684.8px;top:416.5px;" width="4" height="6" viewBox="0 0 4 6"><path d="M1 0.4h2v3.2H1zM0.3 3.6h3.4M2 3.6v2.2" fill="none" stroke="#C9D1EA" stroke-width="0.6"/></svg>
<svg class="a" style="left:694px;top:417px;" width="5" height="5" viewBox="0 0 5 5"><path d="M0.5 0.5l4 4M4.5 0.5l-4 4" stroke="#CBD3EC" stroke-width="0.7"/></svg>
<svg class="a" style="left:4px;top:426px" width="700" height="14"><rect x="0.00" y="0.00" width="700.00" height="13.40" fill="#CCD5F0"/></svg>
<div class="t " style="left:8px;top:427.7px;"><i>显</i><i>示</i><i>输</i><i>出</i><i>来</i><i>源</i>(S):</div>
<div class="a " style="left:62.5px;top:428px;width:168px;height:10.6px;background:#FDFEFF;border:0.5px solid #C3CBE4;box-sizing:border-box;"></div>
<div class="t " style="left:64.4px;top:428px;"><i>生</i><i>成</i></div>
<svg class="a" style="left:224.9px;top:432.4px;" width="3.4" height="2.3" viewBox="0 0 3.4 2.3"><path d="M0 0h3.4000000000000004L1.7000000000000002 2.2z" fill="#1e1e1e"/></svg>
<svg class="a" style="left:234px;top:428px" width="2" height="10"><rect x="0.50" y="0.80" width="0.60" height="9.20" fill="#B3BDDC"/></svg>
<svg class="a" style="left:238.5px;top:429.5px;" width="8" height="8" viewBox="0 0 8 8"><path d="M1 6.8h6M2 5l1.6-3M3.6 2L5 5" stroke="#B4BCD8" stroke-width="0.7" fill="none"/></svg>
<svg class="a" style="left:250px;top:428px" width="2" height="10"><rect x="0.50" y="0.80" width="0.60" height="9.20" fill="#B3BDDC"/></svg>
<svg class="a" style="left:254.5px;top:429.5px;" width="8" height="8" viewBox="0 0 8 8"><path d="M2 2.2h5M3 4.4h4M1 6.6h6M1 1v2.2" stroke="#B4BCD8" stroke-width="0.7" fill="none"/></svg>
<svg class="a" style="left:267px;top:429.5px;" width="8" height="8" viewBox="0 0 8 8"><path d="M2 2.2h5M3 4.4h4M1 6.6h6M1 4.2v2.4" stroke="#B4BCD8" stroke-width="0.7" fill="none"/></svg>
<svg class="a" style="left:279px;top:428px" width="1" height="10"><rect x="0.30" y="0.80" width="0.60" height="9.20" fill="#B3BDDC"/></svg>
<svg class="a" style="left:284.3px;top:429px;" width="9" height="8.4" viewBox="0 0 9 8.4"><path d="M4.3 1.6h4.2M4.3 3.4h4.2M0.6 5.2h7.9M0.6 7h7.9" stroke="#3a3f55" stroke-width="0.7"/><path d="M0.5 0.6l2.8 2.8M3.3 0.6L0.5 3.4" stroke="#D9363E" stroke-width="0.8"/></svg>
<svg class="a" style="left:296px;top:428px" width="2" height="10"><rect x="0.50" y="0.80" width="0.60" height="9.20" fill="#B3BDDC"/></svg>
<svg class="a" style="left:301px;top:429px;" width="9" height="8.4" viewBox="0 0 9 8.4"><path d="M0.6 1.6h3M0.6 3.6h3M0.6 5.6h3M5 2.4h3v3.8H5.6" fill="none" stroke="#3a3f55" stroke-width="0.8"/><path d="M6.6 5.2L5.4 6.3L6.6 7.4" fill="none" stroke="#3a3f55" stroke-width="0.7"/></svg>
<svg class="a" style="left:313px;top:428px" width="1" height="10"><rect x="0.30" y="0.80" width="0.60" height="9.20" fill="#B3BDDC"/></svg>
<svg class="a" style="left:318.3px;top:429px;" width="8.4" height="8.4" viewBox="0 0 8.4 8.4"><circle cx="4.2" cy="4.2" r="3.4" fill="none" stroke="#3a3f55" stroke-width="0.8"/><path d="M4.2 2.2v2.2h1.8" fill="none" stroke="#3a3f55" stroke-width="0.7"/></svg>
<svg class="a" style="left:4px;top:439px" width="700" height="111"><rect x="0.00" y="0.40" width="700.00" height="110.10" fill="#E8E8EB"/></svg>
<svg class="a" style="left:693px;top:439px" width="11" height="111"><rect x="0.50" y="0.40" width="10.50" height="110.10" fill="#E8E8EB"/></svg>
<svg class="a" style="left:696px;top:442.5px;" width="5" height="3" viewBox="0 0 5 3"><path d="M0 3h5L2.5 0z" fill="#868999"/></svg>
<svg class="a" style="left:696px;top:534.5px;" width="5" height="3" viewBox="0 0 5 3"><path d="M0 0h5L2.5 3z" fill="#868999"/></svg>
<svg class="a" style="left:696px;top:507px" width="5" height="11"><rect x="0.00" y="0.50" width="5.00" height="10.50" fill="#B9BAC2"/></svg>
<div class="a " style="left:694px;top:518px;width:10px;height:1px;background:#3453A0;"></div>
<svg class="a" style="left:6.5px;top:544px;" width="2.6" height="3.6" viewBox="0 0 2.6 3.6"><path d="M2.4 0L0.2 1.8L2.4 3.6z" fill="#C8C9CF"/></svg>
<svg class="a" style="left:687px;top:544px;" width="2.6" height="3.6" viewBox="0 0 2.6 3.6"><path d="M0.2 0L2.4 1.8L0.2 3.6z" fill="#C8C9CF"/></svg>
<div class="t m" style="left:10.3px;top:440.6px;">Packaging file 'qjpegd.dll'...</div>
<div class="t m" style="left:10.3px;top:449.038px;">Packaging file 'qsvgicond.dll'...</div>
<div class="t m" style="left:10.3px;top:457.475px;">Packaging file 'qtgad.dll'...</div>
<div class="t m" style="left:10.3px;top:465.913px;">Packaging file 'qt_work.log'...</div>
<div class="t m" style="left:10.3px;top:474.35px;">Packaging file 'application.exe'...</div>
<div class="t m" style="left:10.3px;top:482.788px;">Packaging file 'qt_uk.qm'...</div>
<div class="t m" style="left:10.3px;top:491.225px;">Packaging file 'main.obj'...</div>
<div class="t m" style="left:10.3px;top:499.663px;">Packaging file 'qt_ca.qm'...</div>
<div class="t m" style="left:10.3px;top:508.1px;">Packaging file 'qt_ru.qm'...</div>
<svg class="a" style="left:10px;top:520px" width="34" height="3"><rect x="0.50" y="0.14" width="33.50" height="2.00" fill="#62646e"/></svg>
<div class="t m" style="left:47.5px;top:516.138px;"><i>生</i><i>成</i>: 1 <i>成</i><i>功</i><i>，</i>0 <i>失</i><i>败</i><i>，</i>0 <i>最</i><i>新</i><i>，</i>0 <i>已</i><i>跳</i><i>过</i></div>
<svg class="a" style="left:180px;top:520px" width="33" height="3"><rect x="0.00" y="0.14" width="33.00" height="2.00" fill="#62646e"/></svg>
<svg class="a" style="left:10px;top:528px" width="31" height="3"><rect x="0.50" y="0.58" width="30.00" height="2.00" fill="#62646e"/></svg>
<div class="t m" style="left:44px;top:524.575px;"><i>生</i><i>成</i> <i>开</i><i>始</i><i>于</i> 10:19 PM<i>，</i><i>并</i><i>花</i><i>费</i><i>了</i> 20.020 <i>秒</i></div>
<svg class="a" style="left:183px;top:528px" width="34" height="3"><rect x="0.50" y="0.58" width="33.00" height="2.00" fill="#62646e"/></svg>
<svg class="a" style="left:4px;top:549px" width="34" height="13"><rect x="0.00" y="0.50" width="33.30" height="12.20" fill="#40568D"/></svg>
<div class="t " style="left:7px;top:550.8px;color:#E4E9F8;"><i>错</i><i>误</i><i>列</i><i>表</i></div>
<svg class="a" style="left:37px;top:549px" width="21" height="13"><rect x="0.80" y="0.50" width="19.40" height="12.20" fill="#F7F7F9"/></svg>
<div class="t " style="left:40.5px;top:550.8px;"><i>输</i><i>出</i></div>
<svg class="a" style="left:709px;top:41px" width="367" height="13"><rect x="0.00" y="0.00" width="366.50" height="12.50" fill="#40568D"/></svg>
<div class="t " style="left:711.3px;top:42.3px;color:#fff;"><i>解</i><i>决</i><i>方</i><i>案</i><i>资</i><i>源</i><i>管</i><i>理</i><i>器</i></div>
<svg class="a" style="left:1047px;top:46.3px;" width="4" height="2.4" viewBox="0 0 4 2.4"><path d="M0 0h4L2 2.2z" fill="#C9D1EA"/></svg>
<svg class="a" style="left:1056.8px;top:44px;" width="4" height="6" viewBox="0 0 4 6"><path d="M1 0.4h2v3.2H1zM0.3 3.6h3.4M2 3.6v2.2" fill="none" stroke="#C9D1EA" stroke-width="0.6"/></svg>
<svg class="a" style="left:1066px;top:44.6px;" width="5" height="5" viewBox="0 0 5 5"><path d="M0.5 0.5l4 4M4.5 0.5l-4 4" stroke="#CBD3EC" stroke-width="0.7"/></svg>
<svg class="a" style="left:709px;top:53px" width="367" height="17"><rect x="0.00" y="0.50" width="366.50" height="16.50" fill="#CCD5F0"/></svg>
<svg class="a" style="left:713px;top:58px;" width="7.4" height="7.4" viewBox="0 0 7.4 7.4"><circle cx="3.7" cy="3.7" r="3.1" fill="none" stroke="#B4BCD8" stroke-width="0.6"/><path d="M2.2 3.7h3" stroke="#B4BCD8" stroke-width="0.6"/></svg>
<svg class="a" style="left:725.5px;top:58px;" width="7.4" height="7.4" viewBox="0 0 7.4 7.4"><circle cx="3.7" cy="3.7" r="3.1" fill="none" stroke="#B4BCD8" stroke-width="0.6"/><path d="M2.2 3.7h3" stroke="#B4BCD8" stroke-width="0.6"/></svg>
<svg class="a" style="left:737.5px;top:57.5px;" width="8.4" height="8" viewBox="0 0 8.4 8"><path d="M0.6 4.2L4.2 0.8L7.8 4.2M1.6 3.6v3.8h1.9V5.2h1.4v2.2h1.9V3.6" fill="none" stroke="#3a3f55" stroke-width="0.8"/></svg>
<svg class="a" style="left:749.5px;top:57.3px;" width="9" height="9" viewBox="0 0 9 9"><rect x="3.6" y="0.5" width="4.8" height="5.6" fill="#6a7088" stroke="#3a3f55" stroke-width="0.7"/><path d="M3.6 1.4h4.8" stroke="#dfe3f0" stroke-width="0.6"/><path d="M0.5 6.2L2 5.2V8L0.5 7zM2 5.6L3.8 7.4V4.6L2 6.6" fill="#8A55C9" stroke="#8A55C9" stroke-width="0.5"/></svg>
<svg class="a" style="left:762px;top:56px" width="1" height="12"><rect x="0.00" y="0.00" width="0.60" height="12.00" fill="#9AA5C6"/></svg>
<svg class="a" style="left:766.5px;top:57.5px;" width="9" height="8.4" viewBox="0 0 9 8.4"><circle cx="4.6" cy="4.8" r="2.9" fill="none" stroke="#3a3f55" stroke-width="0.8"/><path d="M4.6 3.2v1.8h1.4" fill="none" stroke="#3a3f55" stroke-width="0.6"/><path d="M0.5 0.8h3.4M2.2 0.8v2" stroke="#3a3f55" stroke-width="0.7"/></svg>
<svg class="a" style="left:779.6px;top:61px;" width="3.8" height="2.3" viewBox="0 0 3.8 2.3"><path d="M0 0h3.8L1.9 2.2z" fill="#2b2b2b"/></svg>
<svg class="a" style="left:786px;top:58.5px;" width="7.4" height="6" viewBox="0 0 7.4 6"><path d="M7 1.6H1M2.4 0.3L0.8 1.6L2.4 2.9M0.4 4.4H6.4M5 3.1L6.6 4.4L5 5.7" fill="none" stroke="#3a3f55" stroke-width="0.7"/></svg>
<svg class="a" style="left:798.8px;top:57.5px;" width="8.6" height="8.4" viewBox="0 0 8.6 8.4"><rect x="0.6" y="0.6" width="7.2" height="7.2" rx="0.6" fill="#DDE3F5" stroke="#454a5e" stroke-width="0.9"/><path d="M0.6 1.4h7.2" stroke="#454a5e" stroke-width="1"/><path d="M2.5 4.6h3.4" stroke="#454a5e" stroke-width="0.8"/></svg>
<svg class="a" style="left:810px;top:56px" width="2" height="12"><rect x="0.50" y="0.00" width="0.60" height="12.00" fill="#9AA5C6"/></svg>
<svg class="a" style="left:815.8px;top:57.6px;" width="8.2" height="8.2" viewBox="0 0 8 8"><path d="M1 7L4.6 3.4" stroke="#2b2b2b" stroke-width="1.5" stroke-linecap="round"/><circle cx="5.5" cy="2.5" r="2.1" fill="#2b2b2b"/><path d="M5.3 2.7L6.6 -0.2L8.3 1.5z" fill="#CCD5F0"/></svg>
<svg class="a" style="left:827.6px;top:59px;" width="8.4" height="6" viewBox="0 0 8.4 6"><path d="M0.5 3h6.4v2.2H0.5z" fill="#E8ECF8" stroke="#3a3f55" stroke-width="0.8"/><path d="M5.2 1.6h2.6" stroke="#3a3f55" stroke-width="0.6" stroke-dasharray="0.8 0.5"/></svg>
<svg class="a" style="left:839px;top:56px" width="1" height="12"><rect x="0.00" y="0.00" width="0.60" height="12.00" fill="#9AA5C6"/></svg>
<svg class="a" style="left:844.3px;top:57.3px;" width="9.2" height="8.8" viewBox="0 0 9.2 8.8"><rect x="3.2" y="0.5" width="5.2" height="5" fill="#b4bacd" stroke="#454a5e" stroke-width="0.8"/><rect x="0.6" y="3" width="4.6" height="5.2" fill="#DDE3F5" stroke="#454a5e" stroke-width="0.8"/><path d="M5 2h2.4" stroke="#454a5e" stroke-width="0.6"/></svg>
<svg class="a" style="left:857.6px;top:57.6px;" width="8" height="8.2" viewBox="0 0 8 8.2"><path d="M0.4 1.2h2M0.4 4.1h2M0.4 7h2M5 1.2h2M5 4.1h2M5 7h2" stroke="#454a5e" stroke-width="1.25"/><path d="M1.4 1.2v5.8M2.4 4.1h2.6" stroke="#454a5e" stroke-width="0.5"/></svg>
<svg class="a" style="left:869.8px;top:57.3px;" width="9" height="8.8" viewBox="0 0 9 8.8"><rect x="3.4" y="0.5" width="5" height="5.2" fill="#9aa1b8" stroke="#454a5e" stroke-width="0.8"/><path d="M3.4 1.5h5" stroke="#454a5e" stroke-width="0.9"/><path d="M1.4 3.2v4.6M0.3 4.4l1.1-1.3l1.1 1.3M0.3 6.8l1.1 1.2l1.1-1.2" fill="none" stroke="#3B6CB8" stroke-width="0.7"/></svg>
<svg class="a" style="left:882px;top:57.3px;" width="9.2" height="8.8" viewBox="-0.3 0 9.2 8.8"><rect x="3.4" y="0.5" width="5" height="5.2" fill="#9aa1b8" stroke="#454a5e" stroke-width="0.8"/><path d="M3.4 1.5h5" stroke="#454a5e" stroke-width="0.9"/><circle cx="2.6" cy="5.2" r="1.3" fill="none" stroke="#454a5e" stroke-width="0.7"/><path d="M0.4 8.6Q0.6 6.6 2.6 6.6Q4.6 6.6 4.8 8.6" fill="none" stroke="#454a5e" stroke-width="0.7"/></svg>
<svg class="a" style="left:894.2px;top:57.3px;" width="9.4" height="8.8" viewBox="0 0 9.4 8.8"><rect x="0.6" y="0.5" width="5" height="6" fill="#8d94ab" stroke="#454a5e" stroke-width="0.8"/><path d="M0.6 1.5h5" stroke="#454a5e" stroke-width="0.9"/><path d="M4.2 6L5.8 7.8L9 3.8" fill="none" stroke="#3B6CB8" stroke-width="1.2"/></svg>
<svg class="a" style="left:907px;top:57.3px;" width="9" height="8.8" viewBox="0 0 9 8.8"><rect x="3.4" y="0.5" width="5" height="5.2" fill="#9aa1b8" stroke="#454a5e" stroke-width="0.8"/><path d="M3.4 1.5h5" stroke="#454a5e" stroke-width="0.9"/><path d="M0.4 6.4h3.4M1.8 4.9L0.4 6.4L1.8 7.9" fill="none" stroke="#3B6CB8" stroke-width="0.9"/></svg>
<div class="a " style="left:709px;top:70px;width:366.5px;height:12px;background:#FDFEFF;border-top:0.6px solid #A9B3D1;border-bottom:0.6px solid #A9B3D1;box-sizing:border-box;"></div>
<div class="t " style="left:711.5px;top:71.2px;color:#6d7285;"><i>搜</i><i>索</i><i>解</i><i>决</i><i>方</i><i>案</i><i>资</i><i>源</i><i>管</i><i>理</i><i>器</i>(Ctrl+;)</div>
<svg class="a" style="left:1060px;top:72.6px;" width="7" height="7" viewBox="0 0 7 7"><circle cx="4.3" cy="2.7" r="1.9" fill="none" stroke="#3a3a3a" stroke-width="0.8"/><path d="M3 4.1L0.8 6.3" stroke="#3a3a3a" stroke-width="1"/></svg>
<svg class="a" style="left:1068px;top:70px" width="1" height="12"><rect x="0.20" y="0.60" width="0.50" height="10.80" fill="#D5DAEA"/></svg>
<svg class="a" style="left:1070.1px;top:75.4px;" width="3.4" height="2.3" viewBox="0 0 3.4 2.3"><path d="M0 0h3.4000000000000004L1.7000000000000002 2.2z" fill="#1e1e1e"/></svg>
<svg class="a" style="left:709px;top:82px" width="367" height="204"><rect x="0.00" y="0.00" width="366.50" height="203.50" fill="#FAFBFF"/></svg>
<svg class="a" style="left:1068px;top:82px" width="8" height="204"><rect x="0.00" y="0.00" width="7.50" height="203.50" fill="#ECECF1"/></svg>
<svg class="a" style="left:1069.7px;top:86.5px;" width="4.4" height="2.8" viewBox="0 0 4.4 2.8"><path d="M0 2.8h4.4L2.2 0z" fill="#868999"/></svg>
<svg class="a" style="left:1069.7px;top:279px;" width="4.4" height="2.8" viewBox="0 0 4.4 2.8"><path d="M0 0h4.4L2.2 2.8z" fill="#868999"/></svg>
<svg class="a" style="left:1069px;top:93px" width="5" height="45"><rect x="0.60" y="0.80" width="4.30" height="43.50" fill="#C2C3C9"/></svg>
<svg class="a" style="left:716.9px;top:85.2px;" width="8.4" height="8.4" viewBox="0 0 7.8 7.8"><rect x="0.5" y="0.5" width="6.8" height="6.8" fill="#FAFBFF" stroke="#3a3f55" stroke-width="0.75"/><path d="M0.5 1.7h6.8" stroke="#3a3f55" stroke-width="0.9"/><path d="M3.6 5.6L4.6 4.8V6.8L3.6 6.1zM4.6 5.2L6.2 6.8V4.2L4.6 6" fill="#8A55C9" stroke="#8A55C9" stroke-width="0.55"/></svg>
<div class="t " style="left:728.6px;top:84.8px;"><i>解</i><i>决</i><i>方</i><i>案</i> 'mainwindows' (7 <i>个</i><i>项</i><i>目</i><i>，</i><i>共</i> 7 <i>个</i>)</div>
<svg class="a" style="left:714.6px;top:97.95px;" width="4.2" height="6.2" viewBox="0 0 4.2 6.2"><path d="M0.6 0.7L3.4 3.1L0.6 5.5z" fill="#FAFBFF" stroke="#1e1e1e" stroke-width="0.85"/></svg>
<svg class="a" style="left:726.8px;top:97.25px;" width="8.8" height="7.8" viewBox="0 0 8.8 7.8"><rect x="0.4" y="0.4" width="8" height="6.8" fill="#F5EEF9" stroke="#6f6a7c" stroke-width="0.65"/><path d="M0.4 1.2h8" stroke="#8a8596" stroke-width="0.7"/><path d="M2.7 2.9v3.2M1.1 4.5h3.2M6.2 3.4v2.2M5.1 4.5h2.2" stroke="#9B3FB5" stroke-width="0.85"/></svg>
<div class="t " style="left:738.7px;top:96.05px;font-weight:bold;">application</div>
<svg class="a" style="left:714.6px;top:109.2px;" width="4.2" height="6.2" viewBox="0 0 4.2 6.2"><path d="M0.6 0.7L3.4 3.1L0.6 5.5z" fill="#FAFBFF" stroke="#1e1e1e" stroke-width="0.85"/></svg>
<svg class="a" style="left:726.8px;top:108.5px;" width="8.8" height="7.8" viewBox="0 0 8.8 7.8"><rect x="0.4" y="0.4" width="8" height="6.8" fill="#F5EEF9" stroke="#6f6a7c" stroke-width="0.65"/><path d="M0.4 1.2h8" stroke="#8a8596" stroke-width="0.7"/><path d="M2.7 2.9v3.2M1.1 4.5h3.2M6.2 3.4v2.2M5.1 4.5h2.2" stroke="#9B3FB5" stroke-width="0.85"/></svg>
<div class="t " style="left:738.7px;top:107.3px;">dockwidgets</div>
<svg class="a" style="left:714.6px;top:120.45px;" width="4.2" height="6.2" viewBox="0 0 4.2 6.2"><path d="M0.6 0.7L3.4 3.1L0.6 5.5z" fill="#FAFBFF" stroke="#1e1e1e" stroke-width="0.85"/></svg>
<svg class="a" style="left:726.8px;top:119.75px;" width="8.8" height="7.8" viewBox="0 0 8.8 7.8"><rect x="0.4" y="0.4" width="8" height="6.8" fill="#F5EEF9" stroke="#6f6a7c" stroke-width="0.65"/><path d="M0.4 1.2h8" stroke="#8a8596" stroke-width="0.7"/><path d="M2.7 2.9v3.2M1.1 4.5h3.2M6.2 3.4v2.2M5.1 4.5h2.2" stroke="#9B3FB5" stroke-width="0.85"/></svg>
<div class="t " style="left:738.7px;top:118.55px;">mainwindow</div>
<svg class="a" style="left:714.6px;top:131.7px;" width="4.2" height="6.2" viewBox="0 0 4.2 6.2"><path d="M0.6 0.7L3.4 3.1L0.6 5.5z" fill="#FAFBFF" stroke="#1e1e1e" stroke-width="0.85"/></svg>
<svg class="a" style="left:726.8px;top:131px;" width="8.8" height="7.8" viewBox="0 0 8.8 7.8"><rect x="0.4" y="0.4" width="8" height="6.8" fill="#F5EEF9" stroke="#6f6a7c" stroke-width="0.65"/><path d="M0.4 1.2h8" stroke="#8a8596" stroke-width="0.7"/><path d="M2.7 2.9v3.2M1.1 4.5h3.2M6.2 3.4v2.2M5.1 4.5h2.2" stroke="#9B3FB5" stroke-width="0.85"/></svg>
<div class="t " style="left:738.7px;top:129.8px;">mdi</div>
<svg class="a" style="left:714.6px;top:142.95px;" width="4.2" height="6.2" viewBox="0 0 4.2 6.2"><path d="M0.6 0.7L3.4 3.1L0.6 5.5z" fill="#FAFBFF" stroke="#1e1e1e" stroke-width="0.85"/></svg>
<svg class="a" style="left:726.8px;top:142.25px;" width="8.8" height="7.8" viewBox="0 0 8.8 7.8"><rect x="0.4" y="0.4" width="8" height="6.8" fill="#F5EEF9" stroke="#6f6a7c" stroke-width="0.65"/><path d="M0.4 1.2h8" stroke="#8a8596" stroke-width="0.7"/><path d="M2.7 2.9v3.2M1.1 4.5h3.2M6.2 3.4v2.2M5.1 4.5h2.2" stroke="#9B3FB5" stroke-width="0.85"/></svg>
<div class="t " style="left:738.7px;top:141.05px;">menus</div>
<svg class="a" style="left:714.6px;top:154.2px;" width="4.2" height="6.2" viewBox="0 0 4.2 6.2"><path d="M0.6 0.7L3.4 3.1L0.6 5.5z" fill="#FAFBFF" stroke="#1e1e1e" stroke-width="0.85"/></svg>
<svg class="a" style="left:726.8px;top:153.5px;" width="8.8" height="7.8" viewBox="0 0 8.8 7.8"><rect x="0.4" y="0.4" width="8" height="6.8" fill="#F5EEF9" stroke="#6f6a7c" stroke-width="0.65"/><path d="M0.4 1.2h8" stroke="#8a8596" stroke-width="0.7"/><path d="M2.7 2.9v3.2M1.1 4.5h3.2M6.2 3.4v2.2M5.1 4.5h2.2" stroke="#9B3FB5" stroke-width="0.85"/></svg>
<div class="t " style="left:738.7px;top:152.3px;">sdi</div>
<svg class="a" style="left:709px;top:162px" width="359" height="12"><rect x="0.00" y="0.25" width="359.00" height="11.10" fill="#E8E9EF"/></svg>
<svg class="a" style="left:714.9px;top:166.35px;" width="4" height="4" viewBox="0 0 4 4"><path d="M3.7 0.1V3.7H0.1z" fill="#222"/></svg>
<svg class="a" style="left:726.8px;top:164.35px;" width="9.4" height="8.6" viewBox="0 0 9.4 8.6"><rect x="0.5" y="0.5" width="6.6" height="5.6" fill="#FAFBFF" stroke="#4a5878" stroke-width="0.7"/><path d="M0.5 1.6h6.6" stroke="#4a5878" stroke-width="0.8"/><circle cx="6.2" cy="5.6" r="2.5" fill="#E6E9F0" stroke="#667089" stroke-width="0.75"/><circle cx="6.2" cy="5.6" r="0.8" fill="#7f89a3"/></svg>
<div class="t " style="left:738.7px;top:163.55px;"><i>记</i><i>事</i><i>本</i></div>
<svg class="a" style="left:737px;top:176px;" width="8.6" height="6.6" viewBox="0 0 8.8 7"><path d="M0.3 0.9h2.9l0.8 0.9h4.4v4.7H0.3z" fill="#F5CE55" stroke="#C99A2C" stroke-width="0.55"/><path d="M0.7 2.5h7.3v3.1H0.7z" fill="#FBE38C"/><path d="M0.3 6.4h8.1" stroke="#A97F22" stroke-width="0.6"/></svg>
<div class="t " style="left:748.5px;top:174.8px;">Detected Dependencies</div>
<div class="a" style="left:709px;top:82px;width:359.0px;height:203.5px;overflow:hidden">
<svg class="a" style="left:28.6px;top:104.65px" width="7.2" height="8.8" viewBox="0 0 7.2 8.8"><path d="M0.4 0.4h4.3l2 2v5.9H0.4z" fill="#EAF1FC" stroke="#5878A8" stroke-width="0.65"/><path d="M4.7 0.4v2h2" fill="#C9DAF2" stroke="#5878A8" stroke-width="0.5"/><path d="M1.5 3.6h3.9M1.5 4.9h3.9M1.5 6.2h3.9" stroke="#4F80C8" stroke-width="0.75"/></svg>
<div class="t" style="left:39.5px;top:104.05px">application.Build.CppClean.log</div>
<svg class="a" style="left:28.6px;top:115.9px" width="7.2" height="8.8" viewBox="0 0 7.2 8.8"><path d="M0.4 0.4h4.3l2 2v5.9H0.4z" fill="#EAF1FC" stroke="#5878A8" stroke-width="0.65"/><path d="M4.7 0.4v2h2" fill="#C9DAF2" stroke="#5878A8" stroke-width="0.5"/><path d="M1.5 3.6h3.9M1.5 4.9h3.9M1.5 6.2h3.9" stroke="#4F80C8" stroke-width="0.75"/></svg>
<div class="t" style="left:39.5px;top:115.3px">application.exe.recipe</div>
<svg class="a" style="left:28.6px;top:127.15px" width="7.2" height="8.8" viewBox="0 0 7.2 8.8"><path d="M0.4 0.4h4.3l2 2v5.9H0.4z" fill="#EAF1FC" stroke="#5878A8" stroke-width="0.65"/><path d="M4.7 0.4v2h2" fill="#C9DAF2" stroke="#5878A8" stroke-width="0.5"/><path d="M1.5 3.6h3.9M1.5 4.9h3.9M1.5 6.2h3.9" stroke="#4F80C8" stroke-width="0.75"/></svg>
<div class="t" style="left:39.5px;top:126.55px">application.exe</div>
<svg class="a" style="left:28.6px;top:138.4px" width="7.2" height="8.8" viewBox="0 0 7.2 8.8"><path d="M0.4 0.4h4.3l2 2v5.9H0.4z" fill="#EAF1FC" stroke="#5878A8" stroke-width="0.65"/><path d="M4.7 0.4v2h2" fill="#C9DAF2" stroke="#5878A8" stroke-width="0.5"/><path d="M1.5 3.6h3.9M1.5 4.9h3.9M1.5 6.2h3.9" stroke="#4F80C8" stroke-width="0.75"/></svg>
<div class="t" style="left:39.5px;top:137.8px">application.ilk</div>
<svg class="a" style="left:28.6px;top:149.65px" width="7.2" height="8.8" viewBox="0 0 7.2 8.8"><path d="M0.4 0.4h4.3l2 2v5.9H0.4z" fill="#EAF1FC" stroke="#5878A8" stroke-width="0.65"/><path d="M4.7 0.4v2h2" fill="#C9DAF2" stroke="#5878A8" stroke-width="0.5"/><path d="M1.5 3.6h3.9M1.5 4.9h3.9M1.5 6.2h3.9" stroke="#4F80C8" stroke-width="0.75"/></svg>
<div class="t" style="left:39.5px;top:149.05px">application.log</div>
<svg class="a" style="left:28.6px;top:160.9px" width="7.2" height="8.8" viewBox="0 0 7.2 8.8"><path d="M0.4 0.4h4.3l2 2v5.9H0.4z" fill="#EAF1FC" stroke="#5878A8" stroke-width="0.65"/><path d="M4.7 0.4v2h2" fill="#C9DAF2" stroke="#5878A8" stroke-width="0.5"/><path d="M1.5 3.6h3.9M1.5 4.9h3.9M1.5 6.2h3.9" stroke="#4F80C8" stroke-width="0.75"/></svg>
<div class="t" style="left:39.5px;top:160.3px">application.pdb</div>
<svg class="a" style="left:28.6px;top:172.15px" width="7.2" height="8.8" viewBox="0 0 7.2 8.8"><path d="M0.4 0.4h4.3l2 2v5.9H0.4z" fill="#EAF1FC" stroke="#5878A8" stroke-width="0.65"/><path d="M4.7 0.4v2h2" fill="#C9DAF2" stroke="#5878A8" stroke-width="0.5"/><path d="M1.5 3.6h3.9M1.5 4.9h3.9M1.5 6.2h3.9" stroke="#4F80C8" stroke-width="0.75"/></svg>
<div class="t" style="left:39.5px;top:171.55px">application.vcxproj.FileListAbsolute.txt</div>
<svg class="a" style="left:28.6px;top:183.4px" width="7.2" height="8.8" viewBox="0 0 7.2 8.8"><path d="M0.4 0.4h4.3l2 2v5.9H0.4z" fill="#EAF1FC" stroke="#5878A8" stroke-width="0.65"/><path d="M4.7 0.4v2h2" fill="#C9DAF2" stroke="#5878A8" stroke-width="0.5"/><path d="M1.5 3.6h3.9M1.5 4.9h3.9M1.5 6.2h3.9" stroke="#4F80C8" stroke-width="0.75"/></svg>
<div class="t" style="left:39.5px;top:182.8px">D3Dcompiler_47.dll</div>
<svg class="a" style="left:28.6px;top:194.65px" width="7.2" height="8.8" viewBox="0 0 7.2 8.8"><path d="M0.4 0.4h4.3l2 2v5.9H0.4z" fill="#EAF1FC" stroke="#5878A8" stroke-width="0.65"/><path d="M4.7 0.4v2h2" fill="#C9DAF2" stroke="#5878A8" stroke-width="0.5"/><path d="M1.5 3.6h3.9M1.5 4.9h3.9M1.5 6.2h3.9" stroke="#4F80C8" stroke-width="0.75"/></svg>
<div class="t" style="left:39.5px;top:194.05px">libEGLd.dll</div>
</div>
<svg class="a" style="left:709px;top:285px" width="66" height="12"><rect x="0.00" y="0.50" width="66.00" height="11.50" fill="#FAFBFF"/></svg>
<div class="t " style="left:711.3px;top:286.2px;"><i>解</i><i>决</i><i>方</i><i>案</i><i>资</i><i>源</i><i>管</i><i>理</i><i>器</i></div>
<svg class="a" style="left:775px;top:285px" width="32" height="12"><rect x="0.00" y="0.50" width="31.80" height="11.50" fill="#40568D"/></svg>
<div class="t " style="left:778.5px;top:286.2px;color:#E4E9F8;">Git <i>更</i><i>改</i></div>
<svg class="a" style="left:709px;top:301px" width="367" height="13"><rect x="0.00" y="0.70" width="366.50" height="12.30" fill="#40568D"/></svg>
<div class="t " style="left:711.3px;top:303px;color:#fff;"><i>属</i><i>性</i></div>
<svg class="a" style="left:1047px;top:307px;" width="4" height="2.4" viewBox="0 0 4 2.4"><path d="M0 0h4L2 2.2z" fill="#C9D1EA"/></svg>
<svg class="a" style="left:1056.8px;top:304.7px;" width="4" height="6" viewBox="0 0 4 6"><path d="M1 0.4h2v3.2H1zM0.3 3.6h3.4M2 3.6v2.2" fill="none" stroke="#C9D1EA" stroke-width="0.6"/></svg>
<svg class="a" style="left:1066px;top:305.3px;" width="5" height="5" viewBox="0 0 5 5"><path d="M0.5 0.5l4 4M4.5 0.5l-4 4" stroke="#CBD3EC" stroke-width="0.7"/></svg>
<svg class="a" style="left:709px;top:314px" width="367" height="14"><rect x="0.00" y="0.00" width="366.50" height="13.80" fill="#FDFEFF"/></svg>
<div class="t " style="left:712.3px;top:315.8px;"><b>Application Folder</b>&nbsp; File Installation Properties</div>
<svg class="a" style="left:1070.1px;top:320.3px;" width="3.4" height="2.3" viewBox="0 0 3.4 2.3"><path d="M0 0h3.4000000000000004L1.7000000000000002 2.2z" fill="#1e1e1e"/></svg>
<svg class="a" style="left:709px;top:327px" width="367" height="16"><rect x="0.00" y="0.80" width="366.50" height="14.40" fill="#C9D3F0"/></svg>
<svg class="a" style="left:712px;top:330.5px;" width="9" height="9" viewBox="0 0 9 9"><path d="M0.6 1h2v2h-2zM0.6 5h2v2h-2z" fill="none" stroke="#3a3f55" stroke-width="0.6"/><path d="M3.6 1.2h4.6M3.6 2.8h3.4M3.6 5.2h4.6M3.6 6.8h3.4" stroke="#3a3f55" stroke-width="0.7"/></svg>
<div class="a " style="left:723px;top:329px;width:13.3px;height:12.2px;background:#FCEFC9;border:0.6px solid #E5C365;box-sizing:border-box;"></div>
<svg class="a" style="left:725.3px;top:330.6px;" width="9" height="9" viewBox="0 0 9 9"><rect x="0.5" y="0.5" width="3.2" height="3.2" fill="none" stroke="#3a3f55" stroke-width="0.7"/><rect x="0.5" y="4.8" width="3.2" height="3.2" fill="none" stroke="#3a3f55" stroke-width="0.7"/><path d="M6.2 0.8v6M4.8 5.4l1.4 1.6l1.4-1.6" fill="none" stroke="#2F62A8" stroke-width="0.9"/></svg>
<svg class="a" style="left:738px;top:330px" width="2" height="11"><rect x="0.50" y="0.00" width="0.60" height="10.50" fill="#9AA5C6"/></svg>
<svg class="a" style="left:742px;top:330.8px;" width="8" height="8" viewBox="0 0 8 8"><path d="M1 7L4.6 3.4" stroke="#8b8f9e" stroke-width="1.5" stroke-linecap="round"/><circle cx="5.5" cy="2.5" r="2.1" fill="#8b8f9e"/><path d="M5.3 2.7L6.6 -0.2L8.3 1.5z" fill="#C9D3F0"/></svg>
<svg class="a" style="left:709px;top:342px" width="367" height="220"><rect x="0.00" y="0.20" width="366.50" height="219.60" fill="#F7F8FD"/></svg>
<svg class="a" style="left:709px;top:342px" width="367" height="66"><rect x="0.00" y="0.20" width="366.50" height="64.92" fill="#F9FAFF"/></svg>
<svg class="a" style="left:709px;top:342px" width="9" height="66"><rect x="0.00" y="0.20" width="8.50" height="64.92" fill="#EFF0F5"/></svg>
<svg class="a" style="left:717px;top:342px" width="167" height="11"><rect x="0.50" y="0.40" width="166.30" height="10.32" fill="#EEEEF1"/></svg>
<div class="t " style="left:719.8px;top:344.3px;color:#8a8d98;">(Name)</div>
<div class="t " style="left:886.8px;top:344.3px;color:#8a8d98;">Application Folder</div>
<svg class="a" style="left:717px;top:352px" width="359" height="2"><rect x="0.50" y="0.92" width="358.00" height="0.50" fill="#F0F1F7"/></svg>
<div class="t " style="left:719.8px;top:355.02px;color:#1e1e1e;">AlwaysCreate</div>
<div class="t " style="left:886.8px;top:355.02px;color:#1e1e1e;">False</div>
<svg class="a" style="left:717px;top:363px" width="359" height="2"><rect x="0.50" y="0.64" width="358.00" height="0.50" fill="#F0F1F7"/></svg>
<div class="t " style="left:719.8px;top:365.74px;color:#1e1e1e;">Condition</div>
<svg class="a" style="left:717px;top:374px" width="359" height="1"><rect x="0.50" y="0.36" width="358.00" height="0.50" fill="#F0F1F7"/></svg>
<div class="t " style="left:719.8px;top:376.46px;color:#1e1e1e;">DefaultLocation</div>
<div class="t " style="left:886.8px;top:376.46px;color:#1e1e1e;font-size:7.38px;">[ProgramFiles64Folder][Manufacturer]\[ProductName]</div>
<svg class="a" style="left:717px;top:385px" width="359" height="1"><rect x="0.50" y="0.08" width="358.00" height="0.50" fill="#F0F1F7"/></svg>
<div class="t " style="left:719.8px;top:387.18px;color:#8a8d98;">Property</div>
<div class="t " style="left:886.8px;top:387.18px;color:#8a8d98;">TARGETDIR</div>
<svg class="a" style="left:717px;top:395px" width="359" height="2"><rect x="0.50" y="0.80" width="358.00" height="0.50" fill="#F0F1F7"/></svg>
<div class="t " style="left:719.8px;top:397.9px;color:#1e1e1e;">Transitive</div>
<div class="t " style="left:886.8px;top:397.9px;color:#1e1e1e;">False</div>
<svg class="a" style="left:717px;top:406px" width="359" height="2"><rect x="0.50" y="0.52" width="358.00" height="0.50" fill="#F0F1F7"/></svg>
<svg class="a" style="left:883px;top:342px" width="2" height="65"><rect x="0.80" y="0.20" width="0.50" height="64.32" fill="#F0F1F7"/></svg>
<svg class="a" style="left:709px;top:528px" width="367" height="1"><rect x="0.00" y="0.00" width="366.50" height="0.50" fill="#EEF0F8"/></svg>
<div class="t " style="left:712.3px;top:532px;font-weight:bold;font-size:6.9px;">(Name)</div>
<div class="t " style="left:712.3px;top:540.9px;font-size:7.45px;">Specifies the name of the selected folder. Read-only for special folders</div>
<div class="a " style="left:0px;top:566px;width:1080px;height:4px;background:#40568D;"></div>
<svg class="a" style="left:2px;top:567.2px;" width="9" height="3" viewBox="0 0 9 3"><rect x="0.5" y="0.5" width="8" height="5" fill="none" stroke="#E4E9F8" stroke-width="0.8"/></svg>
<svg class="a" style="left:919px;top:568px" width="2" height="2"><rect x="0.30" y="0.60" width="1.60" height="1.40" fill="#E4E9F8"/></svg>
<svg class="a" style="left:1004px;top:568px" width="7" height="2"><rect x="0.00" y="0.70" width="7.00" height="1.30" fill="#E4E9F8"/></svg>
<svg class="a" style="left:1065px;top:568px" width="2" height="2"><rect x="0.50" y="0.90" width="1.50" height="1.10" fill="#E4E9F8"/></svg>
</div></body></html>
